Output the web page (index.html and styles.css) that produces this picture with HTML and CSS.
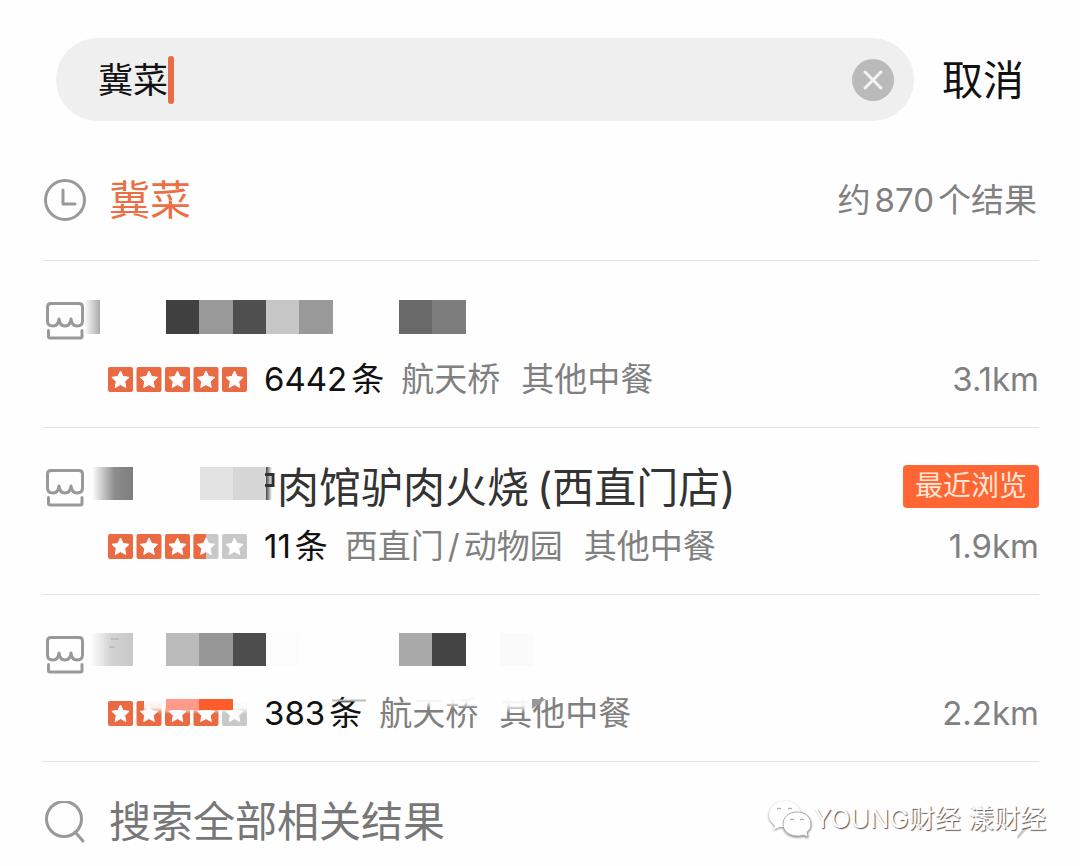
FILE: index.html
```html
<!DOCTYPE html>
<html lang="zh-CN">
<head>
  <meta charset="UTF-8">
  <meta name="viewport" content="width=device-width, initial-scale=1.0">
  <title>搜索</title>
  <link rel="stylesheet" href="styles.css">
</head>
<body>
  <!-- Icons -->
  <svg class="defs" aria-hidden="true">
    <symbol id="shop" viewBox="0 0 38 38">
      <path d="M5 1.500h28q3.500 0 3.500 3.500v14q0 5-5.500 5c-3.500 0-5.500-2.500-6-7-.5 4.500-2.500 7-6 7s-5.500-2.500-6-7c-.5 4.500-2.500 7-6 7q-5.500 0-5.500-5V5q0-3.500 3.500-3.500z"/>
      <path d="M2.500 28.500v6q0 1.500 1.500 1.500h30.500q1.500 0 1.500-1.500v-6"/>
    </symbol>
    <symbol id="star" viewBox="0 0 25 25">
      <path d="M12.500 4l2.600 5.500 6 .8-4.400 4.200 1.100 6-5.300-2.900-5.300 2.900 1.100-6-4.400-4.200 6-.8z"/>
    </symbol>
    <symbol id="stars" viewBox="0 0 139 25">
      <use href="#star" x="0" width="25" height="25"/>
      <use href="#star" x="28.500" width="25" height="25"/>
      <use href="#star" x="57" width="25" height="25"/>
      <use href="#star" x="85.500" width="25" height="25"/>
      <use href="#star" x="114" width="25" height="25"/>
    </symbol>
    <linearGradient id="fade"><stop offset="0" stop-color="#fff"/><stop offset="1" stop-color="#aaa"/></linearGradient>
    <linearGradient id="fade-dark"><stop offset="0" stop-color="#fff"/><stop offset=".55" stop-color="#8c8c8c"/><stop offset="1" stop-color="#7e7e7e"/></linearGradient>
    <linearGradient id="fade-light"><stop offset="0" stop-color="#fff"/><stop offset=".5" stop-color="#d2d2d2"/><stop offset="1" stop-color="#c8c8c8"/></linearGradient>
    <linearGradient id="fade-edge"><stop offset="0" stop-color="#444"/><stop offset="1" stop-color="#fff"/></linearGradient>
    <linearGradient id="fade-down" x2="0" y2="1"><stop offset="0" stop-color="#fff"/><stop offset=".6" stop-color="#fff" stop-opacity=".9"/><stop offset="1" stop-color="#fff" stop-opacity="0"/></linearGradient>
  </svg>

  <!-- Search bar -->
  <form class="search-bar">
    <div class="search-box">
      <input class="search-input" type="text" value="冀菜" aria-label="搜索">
      <span class="caret"></span>
      <button class="clear" type="button" aria-label="清除">
        <svg viewBox="0 0 42 42" width="42" height="42"><circle cx="21" cy="21" r="21"/><path d="M13 13l16 16M29 13L13 29"/></svg>
      </button>
    </div>
    <button class="cancel" type="button">取消</button>
  </form>

  <main class="results">
    <!-- Recent keyword -->
    <a class="keyword" href="#">
      <svg class="icon" viewBox="0 0 42 42" width="42" height="42"><circle cx="21" cy="21" r="19.500"/><path d="M19 11v14h12"/></svg>
      <span class="word">冀菜</span>
      <span class="total">约<span class="num">870</span>个结果</span>
    </a>

    <a class="shop" href="#">
      <svg class="icon shop-icon"><use href="#shop"/></svg>
      <div class="title">
        <svg class="mosaic" width="374" height="56" aria-hidden="true">
          <rect x="-8" y="7" width="16" height="34" fill="url(#fade)"/>
          <rect x="74" y="7" width="34" height="34" fill="#404040"/>
          <rect x="107" y="7" width="34" height="34" fill="#999"/>
          <rect x="141" y="7" width="33" height="34" fill="#4f4f4f"/>
          <rect x="174" y="7" width="33" height="34" fill="#c6c6c6"/>
          <rect x="207" y="7" width="34" height="34" fill="#999"/>
          <rect x="307" y="7" width="34" height="34" fill="#696969"/>
          <rect x="340" y="7" width="34" height="34" fill="#7d7d7d"/>
        </svg>
      </div>
      <div class="meta">
        <svg class="stars" viewBox="0 0 139 25" role="img" aria-label="5星">
          <g class="on"><rect width="25" height="25" rx="2"/><rect x="28.500" width="25" height="25" rx="2"/><rect x="57" width="25" height="25" rx="2"/><rect x="85.500" width="25" height="25" rx="2"/><rect x="114" width="25" height="25" rx="2"/></g>
          <use class="shapes" href="#stars"/>
        </svg>
        <span class="count"><span class="num">6442</span>条</span>
        <span class="area">航天桥</span>
        <span>其他中餐</span>
        <span class="distance">3.1km</span>
      </div>
    </a>

    <a class="shop" href="#">
      <svg class="icon shop-icon"><use href="#shop"/></svg>
      <div class="title">
        <svg class="mosaic" width="185" height="56" aria-hidden="true">
          <rect x="0" y="7" width="41" height="33" fill="url(#fade-dark)"/>
          <rect x="108" y="7" width="33" height="33" fill="#e3e3e3"/>
          <rect x="141" y="7" width="33" height="33" fill="#d6d6d6"/>
          <rect x="174" y="7" width="6" height="33" fill="url(#fade-edge)"/>
          <path d="M173 14.500h8v11h-8" fill="none" stroke="#333" stroke-width="3"/>
        </svg>
        <span>肉馆驴肉火烧<span class="branch">(西直门店)</span></span>
        <span class="tag">最近浏览</span>
      </div>
      <div class="meta">
        <svg class="stars" viewBox="0 0 139 25" role="img" aria-label="3.5星">
          <g class="on"><rect width="25" height="25" rx="2"/><rect x="28.500" width="25" height="25" rx="2"/><rect x="57" width="25" height="25" rx="2"/></g>
          <g class="off"><rect x="85.500" width="25" height="25" rx="2"/><rect x="114" width="25" height="25" rx="2"/></g>
          <path class="on" d="M98 0H87.500q-2 0-2 2v21q0 2 2 2H98z"/>
          <use class="shapes" href="#stars"/>
        </svg>
        <span class="count"><span class="num">11</span>条</span>
        <span class="area">西直门<span class="slash">/</span>动物园</span>
        <span>其他中餐</span>
        <span class="distance">1.9km</span>
      </div>
    </a>

    <a class="shop" href="#">
      <svg class="icon shop-icon"><use href="#shop"/></svg>
      <div class="title">
        <svg class="mosaic" width="441" height="56" aria-hidden="true">
          <rect x="-2" y="6" width="43" height="33" fill="url(#fade-light)"/>
          <path d="M19 12h8M17 20h6" stroke="#aaa" stroke-width="1"/>
          <rect x="74" y="6" width="34" height="33" fill="#bababa"/>
          <rect x="107" y="6" width="34" height="33" fill="#969696"/>
          <rect x="141" y="6" width="33" height="33" fill="#4d4d4d"/>
          <rect x="174" y="6" width="33" height="33" fill="#fcfcfc"/>
          <rect x="307" y="6" width="34" height="33" fill="#a9a9a9"/>
          <rect x="340" y="6" width="34" height="33" fill="#444"/>
          <rect x="408" y="6" width="33" height="33" fill="#fafafa"/>
        </svg>
      </div>
      <div class="meta">
        <svg class="stars" viewBox="0 0 139 25" role="img" aria-label="4星">
          <g class="on"><rect width="25" height="25" rx="2"/><rect x="28.500" width="25" height="25" rx="2"/><rect x="57" width="25" height="25" rx="2"/><rect x="85.500" width="25" height="25" rx="2"/></g>
          <g class="off"><rect x="114" width="25" height="25" rx="2"/></g>
          <use class="shapes" href="#stars"/>
        </svg>
        <span class="count"><span class="num">383</span>条</span>
        <span class="area">航天桥</span>
        <span>其他中餐</span>
        <span class="distance">2.2km</span>
        <svg class="smudge" width="460" height="24" aria-hidden="true">
          <rect x="36" y="4" width="103" height="16" fill="url(#fade-down)"/>
          <rect x="58" y="5" width="34" height="11" fill="#ff998a"/>
          <rect x="91" y="5" width="34" height="11" fill="#ff5c2b"/>
          <path d="M224 6.500h34" stroke="#bbb" stroke-width="2"/>
          <rect x="306" y="0" width="68" height="14" fill="url(#fade-down)"/>
          <rect x="390" y="0" width="34" height="19" fill="url(#fade-down)"/>
          <path d="M424 5h14l-14 10z" fill="#999"/>
        </svg>
      </div>
    </a>

    <!-- Search everything -->
    <a class="more" href="#">
      <svg class="icon" viewBox="0 0 42 42" width="42" height="42"><circle cx="20" cy="18" r="17.500"/><path d="M31 31l8 9"/></svg>
      <span>搜索全部相关结果</span>
      <svg class="icon arrow" viewBox="0 0 20 36" width="20" height="36"><path d="M9 24L1 33"/></svg>
    </a>
  </main>

  <!-- Watermark -->
  <div class="watermark">
    <svg viewBox="0 0 44 38" width="44" height="38" aria-hidden="true">
      <path d="M17 1C8 1 1 7 1 15c0 5 3 8 6 11l-2 4 7-3h6c6 0 15-4 15-12C33 7 26 1 17 1z"/>
      <path class="front" d="M29 12c-8 0-14 5-14 12s6 12 14 12c2 0 4 0 6-1l5 2-1-5c3-2 4-5 4-8 0-7-6-12-14-12z"/>
      <path class="eyes" d="M9 9q2-2 4 0M20 9q2-2 4 0M22 20q2-2 4 0M32 20q2-2 4 0"/>
    </svg>
    <span>YOUNG财经 漾财经</span>
  </div>
</body>
</html>
```
FILE: styles.css
```css
* {
  margin: 0;
  padding: 0;
  box-sizing: border-box;
}

body {
  position: relative;
  background: #fefefe;
  color: #111;
  font-family: Inter, "Noto Sans CJK SC", sans-serif;
  font-size: 33px;
  line-height: 40px;
}

a {
  color: inherit;
  text-decoration: none;
}

button,
input {
  border: none;
  background: none;
  color: inherit;
  font-family: inherit;
}

.defs {
  position: absolute;
  width: 0;
  height: 0;
}

/* Search bar */
.search-bar {
  display: flex;
  align-items: center;
  gap: 28px;
  padding: 38px 56px 0 56px;
}

.search-box {
  flex: 1;
  display: flex;
  align-items: center;
  height: 83px;
  padding: 0 20px 0 42px;
  background: #efefef;
  border-radius: 42px;
}

.search-input {
  field-sizing: content;
  height: 56px;
  padding-bottom: 4px;
  font-size: 35px;
  outline: none;
}

.caret {
  width: 6px;
  height: 48px;
  border-radius: 3px;
  background: #e86c45;
}

.clear {
  display: flex;
  margin-left: auto;
}

.clear circle {
  fill: #bababa;
}

.clear path {
  stroke: #f4f4f4;
  stroke-width: 3;
  stroke-linecap: round;
}

.cancel {
  font-size: 41px;
  line-height: 56px;
}

/* Result list */
.results {
  padding: 0 41px 0 42px;
}

.icon {
  fill: none;
  stroke: #999;
  stroke-width: 3;
  stroke-linecap: round;
  stroke-linejoin: round;
}

.num {
  margin-right: 4px;
}

.keyword {
  display: flex;
  align-items: center;
  padding: 18px 2px 0;
  height: 140px;
  border-bottom: 1px solid #e4e4e4;
}

.word {
  margin-left: 23px;
  color: #ec6f43;
  font-size: 41px;
}

.total {
  margin-left: auto;
  color: #808080;
}

.total .num {
  margin-left: 4px;
}

/* Shop row */
.shop {
  display: grid;
  grid-template-columns: 50px 1fr;
  row-gap: 10px;
  align-items: center;
  padding: 32px 0 28px;
  border-bottom: 1px solid #e4e4e4;
}

.shop-icon {
  width: 38px;
  height: 38px;
  margin-left: 4px;
}

.title {
  display: flex;
  align-items: center;
  height: 56px;
  color: #333;
  font-size: 42px;
  line-height: 56px;
  white-space: nowrap;
}

.mosaic {
  overflow: visible;
}

.branch {
  margin-left: 8px;
}

.tag {
  margin-left: auto;
  margin-bottom: 3px;
  padding: 0 12px;
  border-radius: 4px;
  background: #ff6633;
  color: #ffe6d5;
  font-size: 28px;
  line-height: 43px;
}

.meta {
  grid-column: 2;
  position: relative;
  display: flex;
  align-items: center;
  gap: 17px;
  padding-left: 16px;
  color: #808080;
  white-space: nowrap;
}

.stars {
  width: 139px;
  height: 25px;
}

.shapes {
  fill: #fff;
  stroke: #fff;
  stroke-width: 1;
  stroke-linejoin: round;
}

.on {
  fill: #e96a43;
}

.off {
  fill: #c8c8c8;
}

.count {
  color: #111;
}

.area {
  margin-right: 4px;
}

.slash {
  margin: 0 4px;
}

.distance {
  margin-left: auto;
}

.smudge {
  position: absolute;
  left: 16px;
  top: 1px;
}

/* Search everything */
.more {
  display: flex;
  align-items: center;
  gap: 23px;
  height: 104px;
  padding: 16px 2px 0;
  color: #777;
  font-size: 42px;
}

.arrow {
  margin-left: auto;
  stroke: #ccc;
}

/* Watermark */
.watermark {
  position: absolute;
  right: 34px;
  bottom: 27px;
  display: flex;
  align-items: center;
  gap: 2px;
  color: #fff;
  font-size: 26px;
  text-shadow: 1px 1px 1px #555;
}

.watermark svg {
  overflow: visible;
  fill: #fff;
  filter: drop-shadow(0 1px 1px #888);
}

.front {
  stroke: #aaa;
  stroke-width: 1;
}

.eyes {
  fill: none;
  stroke: #999;
  stroke-width: 1;
}
```
